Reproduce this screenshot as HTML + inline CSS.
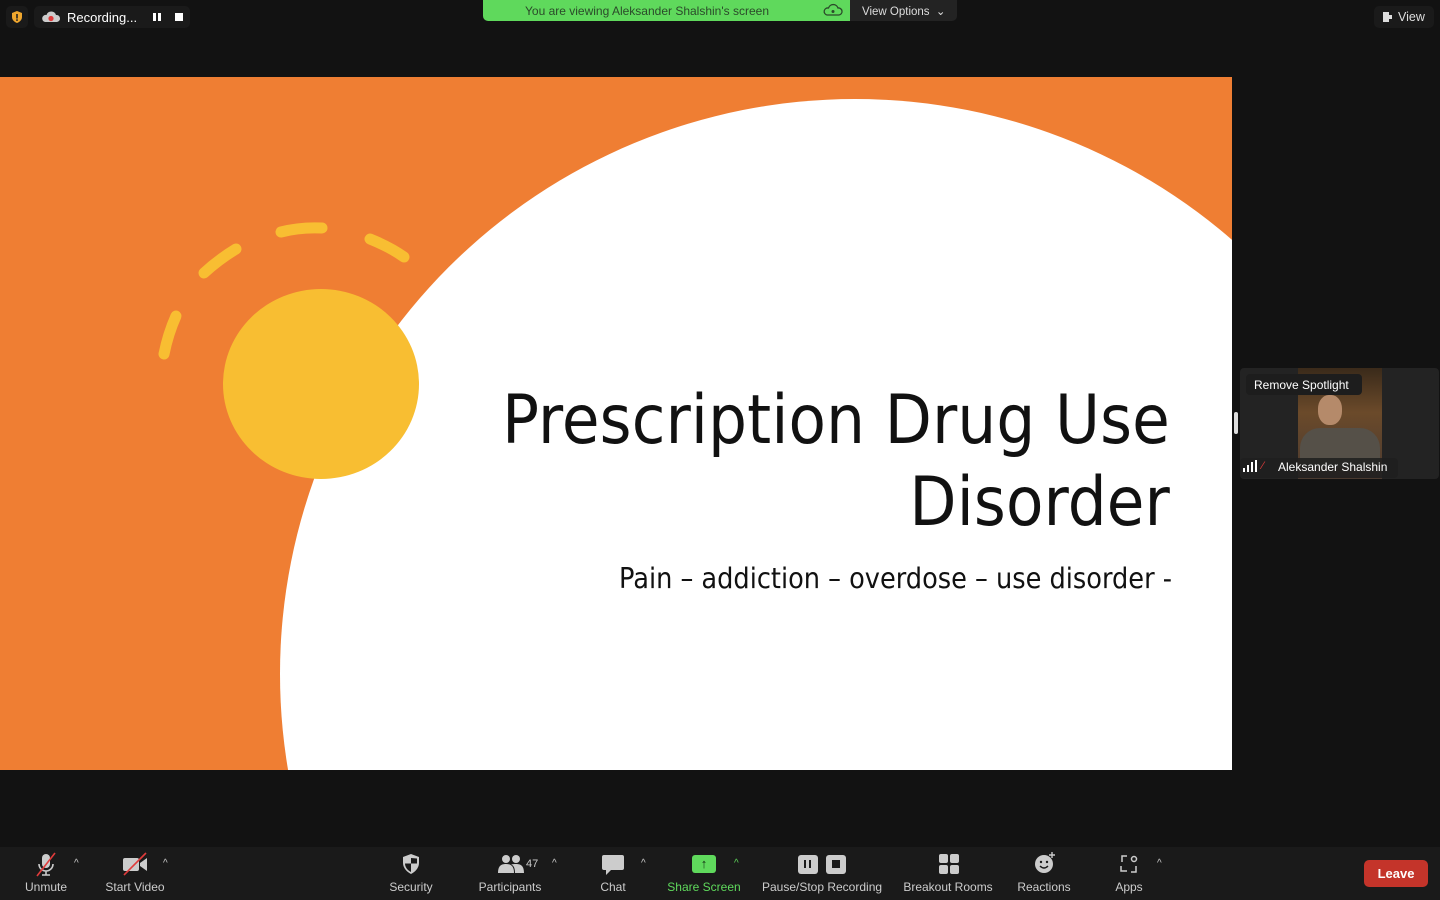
<!DOCTYPE html>
<html><head><meta charset="utf-8"><style>
*{margin:0;padding:0;box-sizing:border-box}
html,body{width:1440px;height:900px;overflow:hidden}
body{background:#121212;position:relative;font-family:"Liberation Sans",Arial,sans-serif;color:#fff}
.abs{position:absolute}
.tb{position:absolute;top:847px;left:0;width:1440px;height:53px;background:#1a1a1a}
.btn{position:absolute;top:880px;font-size:12px;line-height:14px;color:#ccc;transform:translateX(-50%);white-space:nowrap}
.car{position:absolute;top:858px;font-size:10px;line-height:12px;color:#ccc}
</style></head><body>
<div class="abs" style="left:6px;top:6px;width:22px;height:22px;background:#1a1a1a;border-radius:5px"></div>
<svg class="abs" style="left:10px;top:10px" width="14" height="14" viewBox="0 0 14 14"><path d="M7 1L12 3V7C12 10 9.5 12 7 13C4.5 12 2 10 2 7V3Z" fill="#f0a72e"/><rect x="6.2" y="4" width="1.6" height="4.5" fill="#222"/><rect x="6.2" y="9.3" width="1.6" height="1.6" fill="#222"/></svg>
<div class="abs" style="left:34px;top:6px;width:156px;height:22px;background:#1a1a1a;border-radius:5px"></div>
<svg class="abs" style="left:41px;top:10px" width="20" height="14" viewBox="0 0 20 14"><path d="M4 12H16A3.5 3.5 0 0 0 15 5A5 5 0 0 0 5.5 5A3.5 3.5 0 0 0 4 12Z" fill="#ccc"/><circle cx="10" cy="8.5" r="2.6" fill="#e03b3b"/></svg>
<div class="abs" style="left:67px;top:10px;font-size:13px;color:#fff">Recording...</div>
<div class="abs" style="left:153px;top:13px;width:3px;height:8px;background:#fff"></div>
<div class="abs" style="left:158px;top:13px;width:3px;height:8px;background:#fff"></div>
<div class="abs" style="left:175px;top:13px;width:8px;height:8px;background:#fff"></div>
<div class="abs" style="left:483px;top:0;width:367px;height:21px;background:#5fd95c;border-radius:0 0 0 5px"></div>
<div class="abs" style="left:525px;top:4px;font-size:12px;color:#2b4a2a">You are viewing Aleksander Shalshin's screen</div>
<svg class="abs" style="left:823px;top:3px" width="20" height="15" viewBox="0 0 20 15"><path d="M4 12H16A3.5 3.5 0 0 0 15 5A5 5 0 0 0 5.5 5A3.5 3.5 0 0 0 4 12Z" fill="none" stroke="#2b4a2a" stroke-width="1.3"/><circle cx="10" cy="8.5" r="1.5" fill="#2b4a2a"/></svg>
<div class="abs" style="left:850px;top:0;width:107px;height:21px;background:#232323;border-radius:0 0 5px 0"></div>
<div class="abs" style="left:862px;top:4px;font-size:11.5px;color:#ddd">View Options &nbsp;⌄</div>
<div class="abs" style="left:1374px;top:6px;width:60px;height:22px;background:#1a1a1a;border-radius:5px"></div>
<div class="abs" style="left:1383px;top:12px;width:6px;height:10px;background:#ddd"></div>
<div class="abs" style="left:1389px;top:15px;width:3px;height:4px;background:#ddd"></div>
<div class="abs" style="left:1398px;top:10px;font-size:12.5px;color:#ddd">View</div>
<svg class="abs" style="left:0;top:77px" width="1232" height="693" viewBox="0 77 1232 693">
<rect x="0" y="77" width="1232" height="693" fill="#ef7e33"/>
<circle cx="855" cy="674" r="575" fill="#fff"/>
<ellipse cx="321" cy="384" rx="98" ry="95" fill="#f8be32"/>
<g stroke="#f8be32" stroke-width="11" stroke-linecap="round" fill="none">
<path d="M281 232Q300 227 322 228"/><path d="M370 239Q390 247 404 257"/><path d="M204 273Q218 260 236 249"/><path d="M176 316Q168 334 164 354"/>
</g>
</svg>
<div class="abs" style="right:270px;top:380px;font-size:68px;color:#111;text-align:right;line-height:82px;font-family:'DejaVu Sans Condensed','Liberation Sans',sans-serif;letter-spacing:0.2px;white-space:nowrap">Prescription Drug Use<br>Disorder</div>
<div class="abs" style="right:268px;top:562px;font-size:28.5px;color:#111;font-family:'DejaVu Sans Condensed','Liberation Sans',sans-serif;white-space:nowrap">Pain – addiction – overdose – use disorder -</div>
<div class="abs" style="left:1234px;top:412px;width:4px;height:22px;background:#ddd;border-radius:2px"></div>
<div class="abs" style="left:1240px;top:368px;width:199px;height:111px;background:#232323;border-radius:4px"></div>
<div class="abs" style="left:1298px;top:368px;width:84px;height:111px;background:linear-gradient(180deg,#3a2a1a,#6b4a2a 40%,#4a3a30)"></div>
<div class="abs" style="left:1318px;top:395px;width:24px;height:30px;background:#b58a6a;border-radius:45%"></div>
<div class="abs" style="left:1300px;top:428px;width:80px;height:40px;background:#555048;border-radius:20px 20px 0 0"></div>
<div class="abs" style="left:1246px;top:374px;width:116px;height:21px;background:#1d1d1d;border-radius:4px"></div>
<div class="abs" style="left:1254px;top:378px;font-size:12px;color:#fff">Remove Spotlight</div>
<div class="abs" style="left:1240px;top:458px;width:158px;height:20px;background:rgba(30,30,30,.85);border-radius:4px"></div>
<div class="abs" style="left:1243px;top:468px;width:2px;height:4px;background:#fff"></div>
<div class="abs" style="left:1247px;top:465px;width:2px;height:7px;background:#fff"></div>
<div class="abs" style="left:1251px;top:462px;width:2px;height:10px;background:#fff"></div>
<div class="abs" style="left:1255px;top:460px;width:2px;height:12px;background:#fff"></div>
<div class="abs" style="left:1262px;top:460px;font-size:11px;color:#e03b3b">⁄</div>
<div class="abs" style="left:1278px;top:460px;font-size:12px;color:#fff">Aleksander Shalshin</div>
<div class="tb"></div>
<svg class="abs" style="left:33px;top:852px" width="26" height="26" viewBox="0 0 26 26"><rect x="9" y="2" width="8" height="14" rx="4" fill="#ccc"/><path d="M6 12A7 7 0 0 0 20 12M13 19V23M9 23H17" stroke="#ccc" stroke-width="1.6" fill="none"/><path d="M4 24L22 1" stroke="#e03b3b" stroke-width="1.6"/></svg>
<div class="btn" style="left:46px">Unmute</div><div class="car" style="left:74px">^</div>
<svg class="abs" style="left:121px;top:852px" width="28" height="24" viewBox="0 0 28 24"><rect x="2" y="6" width="16" height="13" rx="2" fill="#ccc"/><path d="M19 11L26 6V19L19 14Z" fill="#ccc"/><path d="M3 23L25 1" stroke="#e03b3b" stroke-width="1.6"/></svg>
<div class="btn" style="left:135px">Start Video</div><div class="car" style="left:163px">^</div>
<svg class="abs" style="left:400px;top:853px" width="22" height="22" viewBox="0 0 22 22"><path d="M11 1L19 4V10C19 15 15 19 11 21C7 19 3 15 3 10V4Z" fill="#ccc"/><path d="M11 3V19C8 17.5 5 14.5 5 10.5H11V5L17 5.5V10.5H11" fill="#1a1a1a"/></svg>
<div class="btn" style="left:411px">Security</div>
<svg class="abs" style="left:497px;top:854px" width="28" height="20" viewBox="0 0 28 20"><circle cx="9" cy="5" r="4" fill="#ccc"/><circle cx="19" cy="5" r="4" fill="#ccc"/><path d="M1 19C1 12 4 10 9 10C14 10 17 12 17 19Z" fill="#ccc"/><path d="M18 19C18 13 16 11 14 10.5C16 10 17 10 19 10C24 10 27 12 27 19Z" fill="#ccc"/></svg>
<div class="abs" style="left:526px;top:858px;font-size:11px;color:#ccc">47</div>
<div class="btn" style="left:510px">Participants</div><div class="car" style="left:552px">^</div>
<svg class="abs" style="left:601px;top:854px" width="24" height="22" viewBox="0 0 24 22"><path d="M3 1H21A2 2 0 0 1 23 3V14A2 2 0 0 1 21 16H10L5 21V16H3A2 2 0 0 1 1 14V3A2 2 0 0 1 3 1Z" fill="#ccc"/></svg>
<div class="btn" style="left:613px">Chat</div><div class="car" style="left:641px">^</div>
<div class="abs" style="left:692px;top:855px;width:24px;height:18px;background:#5fd95c;border-radius:3px;color:#143014;font-size:13px;text-align:center;line-height:18px;font-weight:bold">↑</div>
<div class="btn" style="left:704px;color:#5fd95c">Share Screen</div><div class="car" style="left:734px;color:#5fd95c">^</div>
<div class="abs" style="left:798px;top:855px;width:20px;height:19px;background:#ccc;border-radius:3px"></div>
<div class="abs" style="left:804px;top:860px;width:2px;height:8px;background:#1a1a1a"></div><div class="abs" style="left:809px;top:860px;width:2px;height:8px;background:#1a1a1a"></div>
<div class="abs" style="left:826px;top:855px;width:20px;height:19px;background:#ccc;border-radius:3px"></div>
<div class="abs" style="left:832px;top:860px;width:8px;height:8px;background:#1a1a1a"></div>
<div class="btn" style="left:822px">Pause/Stop Recording</div>
<div class="abs" style="left:939px;top:854px;width:9px;height:9px;background:#ccc;border-radius:2px"></div><div class="abs" style="left:950px;top:854px;width:9px;height:9px;background:#ccc;border-radius:2px"></div>
<div class="abs" style="left:939px;top:865px;width:9px;height:9px;background:#ccc;border-radius:2px"></div><div class="abs" style="left:950px;top:865px;width:9px;height:9px;background:#ccc;border-radius:2px"></div>
<div class="btn" style="left:948px">Breakout Rooms</div>
<svg class="abs" style="left:1033px;top:851px" width="24" height="24" viewBox="0 0 24 24"><circle cx="11" cy="13" r="9" fill="#ccc"/><circle cx="8" cy="11" r="1.2" fill="#1a1a1a"/><circle cx="14" cy="11" r="1.2" fill="#1a1a1a"/><path d="M7 15Q11 19 15 15" stroke="#1a1a1a" stroke-width="1.4" fill="none"/><path d="M19 1V7M16 4H22" stroke="#ccc" stroke-width="1.4"/></svg>
<div class="btn" style="left:1044px">Reactions</div>
<svg class="abs" style="left:1119px;top:854px" width="20" height="20" viewBox="0 0 20 20" fill="none" stroke="#ccc" stroke-width="1.5"><path d="M8 2H3V8M2 12V17H8M12 18H17V12"/><circle cx="15" cy="5" r="2.5"/></svg>
<div class="btn" style="left:1129px">Apps</div><div class="car" style="left:1157px">^</div>
<div class="abs" style="left:1364px;top:860px;width:64px;height:27px;background:#c4342a;border-radius:5px;font-size:13px;font-weight:bold;text-align:center;line-height:27px">Leave</div>
</body></html>
